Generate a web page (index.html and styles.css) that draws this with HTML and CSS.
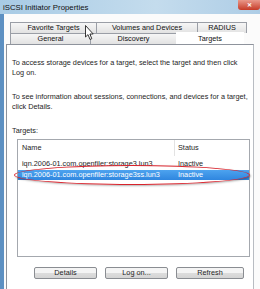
FILE: index.html
```html
<!DOCTYPE html>
<html lang="en">
<head>
<meta charset="utf-8">
<title>iSCSI Initiator Properties</title>
<link rel="stylesheet" href="styles.css">
</head>
<body>
<div class="frame">
	<div class="titlebar">
		<span class="title">iSCSI Initiator Properties</span>
		<span class="close">&#x2715;</span>
	</div>
	<div class="client">
		<div class="tabrow">
			<div class="tab w87">Favorite Targets</div>
			<div class="tab w101">Volumes and Devices</div>
			<div class="tab w50">RADIUS</div>
		</div>
		<div class="tabrow">
			<div class="tab w80">General</div>
			<div class="tab w87">Discovery</div>
			<div class="tab sel w68">Targets</div>
		</div>
		<div class="page">
			<p class="txt">To access storage devices for a target, select the target and then click<br>Log on.</p>
			<p class="txt">To see information about sessions, connections, and devices for a target, click Details.</p>
			<p class="lbl">Targets:</p>
			<div class="list">
				<div class="row head">
					<span class="c1">Name</span>
					<span class="c2">Status</span>
				</div>
				<div class="row">
					<span class="c1">iqn.2006-01.com.openfiler:storage3.lun3</span>
					<span class="c2">Inactive</span>
				</div>
				<div class="row hl">
					<span class="c1">iqn.2006-01.com.openfiler:storage3ss.lun3</span>
					<span class="c2">Inactive</span>
				</div>
				<div class="ring"></div>
			</div>
			<div class="buttons">
				<div class="btn w63">Details</div>
				<div class="btn w63">Log on...</div>
				<div class="btn w68">Refresh</div>
			</div>
		</div>
	</div>
	<!-- mouse pointer -->
	<svg class="cursor" width="10" height="16" viewBox="0 0 10 16">
		<path d="M0.5 0.5 L0.5 12 L3 9.6 L5 14.5 L6.8 13.7 L4.9 9 L8.2 9 Z" fill="#fff" stroke="#222" stroke-width="0.9" stroke-linejoin="round"/>
	</svg>
</div>
</body>
</html>
```

FILE: styles.css
```css
body {margin:0;background:#fff;font-family:"Liberation Sans",Arial,sans-serif;font-size:7.3px;color:#1e1e1e;}
.frame {position:relative;width:260px;height:289px;overflow:hidden;display:flex;flex-direction:column;background:#f4f5f7;}
.titlebar {height:14px;flex:none;display:flex;justify-content:space-between;align-items:flex-start;
	background:linear-gradient(to right,#a8cbe5,#c4dced 60%,#aecde6);}
.title {padding:3px 0 0 3px;font-size:7.8px;line-height:10px;color:#111;}
.close {width:22px;height:10px;background:linear-gradient(#e9988a,#c63b27);color:#fff;font-size:6px;line-height:10px;
	text-align:center;border-radius:0 0 3px 3px;font-weight:bold;}
.client {flex:1;display:flex;flex-direction:column;padding:8px 6px 0 2px;background:#fbfbfb;border-left:4px solid #5d90c2;}
.tabrow {display:flex;padding-left:4px;height:11px;flex:none;}
.tab {box-sizing:border-box;height:11px;border:1px solid #9a9ea6;border-bottom:none;color:#111;
	background:linear-gradient(#f6f6f6,#e2e2e2);text-align:center;line-height:10px;}
.tab + .tab {margin-left:-1px;}
.tab.sel {background:#fff;border-color:#fff;height:12px;margin-top:-1px;line-height:11px;}
.w87 {width:87px;} .w101 {width:102px;} .w50 {width:50px;} .w80 {width:81px;} .w68 {width:68px;} .w63 {width:63px;}
.page {flex:1;border:1px solid #8e939c;border-right-color:#b8bcc2;border-bottom:none;background:#fff;padding:13px 4px 0 5px;}
.txt {margin:0 0 14px 0;line-height:10px;}
.lbl {margin:0 0 3px 0;line-height:10px;}
.list {position:relative;margin-left:5px;width:233px;height:118px;box-sizing:border-box;border:1px solid #a4a8ae;}
.row {display:flex;height:11px;line-height:11px;}
.row.head {height:16px;line-height:16px;margin-bottom:2px;}
.c1 {width:157px;padding-left:4px;box-sizing:border-box;white-space:nowrap;}
.c2 {padding-left:3px;}
.head .c1 {border-right:1px solid #e3e3e3;}
.row.hl {background:linear-gradient(#4da3ef,#2f86df);color:#fff;height:10px;line-height:10px;margin-top:1px;}
.ring {position:absolute;left:-4px;top:25px;width:236px;height:20px;box-sizing:border-box;border:1.5px solid #d8232c;
	border-radius:50%;box-shadow:1px 1px 2px rgba(0,0,0,0.3);}
.buttons {display:flex;gap:8px;margin:10px 0 0 22px;}
.btn {box-sizing:border-box;height:12px;border:1px solid #8a8d92;border-radius:2px;text-align:center;line-height:10px;
	background:linear-gradient(#f4f4f4 45%,#dcdcdc 55%,#d4d4d4);}
.cursor {position:absolute;left:85px;top:25px;}
```
